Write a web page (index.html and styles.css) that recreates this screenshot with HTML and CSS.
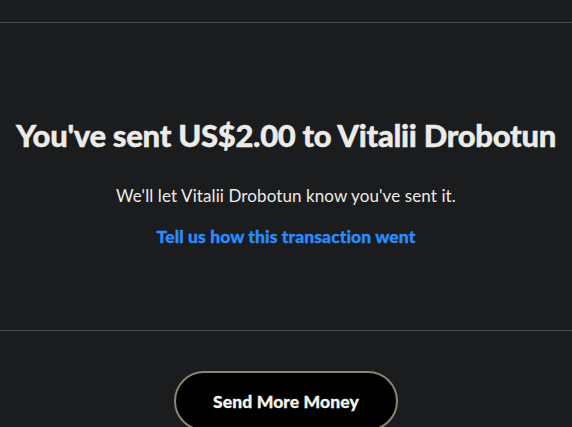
FILE: index.html
```html
<!DOCTYPE html>
<html lang="en">
<head>
<meta charset="utf-8">
<title>Sent</title>
<link rel="stylesheet" href="styles.css">
</head>
<body>
<div class="page">
  <div class="top"></div>
  <section class="result">
    <h1 class="title">You've sent US$2.00 to Vitalii Drobotun</h1>
    <p class="note">We'll let Vitalii Drobotun know you've sent it.</p>
    <a class="feedback" href="#">Tell us how this transaction went</a>
  </section>
  <div class="actions">
    <button class="btn">Send More Money</button>
  </div>
</div>
</body>
</html>
```
FILE: styles.css
```css
html, body {
  margin: 0;
  padding: 0;
  background: #1b1c1e;
  height: 100%;
  overflow: hidden;
}
.page {
  font-family: Lato, "Liberation Sans", sans-serif;
  color: #ecebe8;
}
.top {
  height: 22px;
  border-bottom: 1px solid #46474a;
}
.result {
  display: flex;
  flex-direction: column;
  align-items: center;
  padding: 92px 0 0;
  height: 215px;
  border-bottom: 1px solid #46474a;
}
.title {
  margin: 0;
  font-size: 31px;
  font-weight: 900;
  letter-spacing: -0.3px;
  line-height: 40px;
  white-space: nowrap;
  -webkit-text-stroke: 0.4px #ecebe8;
}
.note {
  margin: 31px 0 0;
  font-size: 17px;
  letter-spacing: 0.1px;
  line-height: 20px;
}
.feedback {
  margin-top: 21px;
  font-size: 17.5px;
  font-weight: 900;
  letter-spacing: 0.1px;
  line-height: 20px;
  color: #2b8cff;
  text-decoration: none;
  -webkit-text-stroke: 0.3px #2b8cff;
}
.actions {
  display: flex;
  justify-content: center;
  padding-top: 40px;
}
.btn {
  width: 224px;
  height: 60px;
  border: 2px solid #8c8373;
  border-radius: 30px;
  background: #000;
  color: #f2f2ef;
  font-family: Lato, "Liberation Sans", sans-serif;
  font-size: 17.5px;
  font-weight: 900;
  letter-spacing: 0.1px;
  -webkit-text-stroke: 0.3px #f2f2ef;
}
```
